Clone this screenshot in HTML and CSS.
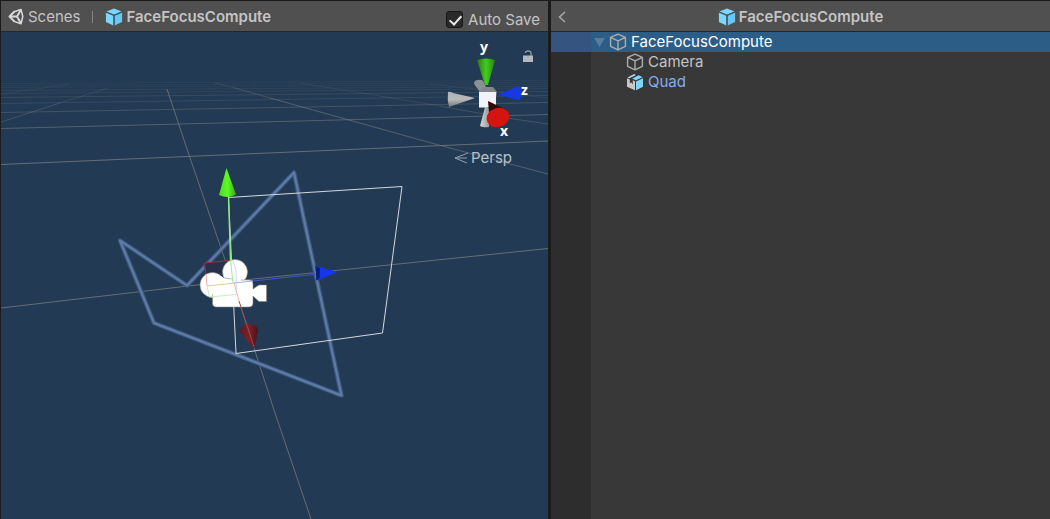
FILE: index.html
```html
<!DOCTYPE html>
<html lang="en">
<head>
<meta charset="utf-8">
<meta name="viewport" content="width=device-width, initial-scale=1">
<title>FaceFocusCompute</title>
<link rel="stylesheet" href="styles.css">
</head>
<body>
<svg class="defs" width="0" height="0" aria-hidden="true">
  <symbol id="prefab" viewBox="0 0 18 18">
    <path d="M9 .6 16.6 3.6 9 6.8 1.4 3.6Z" fill="#7fd6fd"/>
    <path d="M.9 4.4 8.4 7.6V17.4L.9 14Z" fill="#7fd6fd"/>
    <path d="M17.1 4.4 9.6 7.6V17.4L17.1 14Z" fill="#6ac6f2"/>
    <path d="M1 4 9 7.3 17 4M9 7.3V17" fill="none" stroke="#31566a" stroke-width="1.1"/>
  </symbol>
  <symbol id="cube" viewBox="0 0 18 18">
    <path d="M9 1.2 16.4 4.4V13.4L9 16.8 1.6 13.4V4.4ZM1.6 4.4 9 7.9 16.4 4.4M9 7.9V16.8" fill="none" stroke="currentColor" stroke-width="1.4" stroke-linejoin="round"/>
  </symbol>
  <symbol id="variant" viewBox="0 0 18 18">
    <path d="M1.4 4.4 8.2 1.1 10 1.9 3.4 5.3Z" fill="#a9dcf2"/>
    <path d="M6.2 5.5 12.8 2.3 16.6 4.2 9.8 7.2Z" fill="#7fd6fd"/>
    <path d="M1 5.3 3.8 6.6V10.6L5.3 9.2 6.8 11.6V7.2L9 8.2V17.2L1 13.8Z" fill="#c8c8c8"/>
    <path d="M10 8.4 17 5.2V13.8L10 17.2Z" fill="#7fd6fd"/>
  </symbol>
</svg>
<div class="editor">
  <main class="pane scene-pane">
    <header class="bar">
      <nav class="crumbs" aria-label="Breadcrumb">
        <a class="crumb" href="#scenes">
          <svg class="icon" viewBox="0 0 18 18" aria-hidden="true"><path d="M7 3.800 14 1.500 15.800 8.500 14 15.800 7 13.400" fill="none" stroke="#d8d8d8" stroke-width="1.500" stroke-linejoin="round"/><path d="M7.500 3.500 2.500 8.500 7.500 13.600M2.500 8.500H10M10 8.500 13.800 2M10 8.500 13.800 15.200" fill="none" stroke="#d8d8d8" stroke-width="2" stroke-linejoin="round"/></svg>
          <span>Scenes</span>
        </a>
        <span class="rule"></span>
        <a class="crumb current" href="#prefab-root"><svg class="icon" aria-hidden="true"><use href="#prefab"/></svg><span>FaceFocusCompute</span></a>
      </nav>
      <label class="autosave"><input class="tick" type="checkbox" checked><span>Auto Save</span></label>
    </header>
    <div class="view">
      <svg class="world" viewBox="1 32 547 487" preserveAspectRatio="xMinYMin slice" role="img" aria-label="Scene view with camera and quad">
        <defs>
          <linearGradient id="greenCone"><stop offset="0" stop-color="#4bdc19"/><stop offset=".5" stop-color="#5cfb24"/><stop offset="1" stop-color="#39ad12"/></linearGradient>
          <linearGradient id="redCone"><stop offset="0" stop-color="#5c1c24"/><stop offset=".5" stop-color="#7c2027"/><stop offset="1" stop-color="#48141b"/></linearGradient>
        </defs>
        <g fill="none" stroke="#777b7d" stroke-width="1">
          <path d="M1 308 188 286 234 281 548 248.500M167 89 188 152 234 286 274 410 311 519" opacity=".8"/>
          <path d="M1 164.500 280 152.500 548 141" opacity=".8"/>
          <path d="M1 128.500 280 121.500 548 114.500M270 98 435 144 548 174" opacity=".6"/>
          <path d="M1 112.500 280 107.500 548 102.500M1 122 60 103M235 88 270 98M440 106 500 117 548 124" opacity=".4"/>
          <path d="M60 103 108 88M215 83 235 88M380 96 440 106M1 103.500 280 99.500 548 95.500M1 97.500 280 94.500 548 91.500" opacity=".25"/>
          <path d="M1 93.500 548 88.500M1 90.500 548 86.500M1 94 70 84M300 83 380 96M430 84 548 98" opacity=".16"/>
          <path d="M1 87.500 548 84.500M1 85.500 548 82.500M1 83.500 548 80.500" opacity=".1"/>
        </g>
        <path d="M120 240.500 187 285.500 294 172.500 341.500 395.500 154 323Z" fill="none" stroke="#3f5b83" stroke-width="4.500" stroke-linejoin="round"/>
        <path d="M120 240.500 187 285.500 294 172.500 341.500 395.500 154 323Z" fill="none" stroke="#607ba6" stroke-width="2" stroke-linejoin="round"/>
        <path d="M228.500 197.500 402 186.500 382.500 333 236 353.500Z" fill="none" stroke="#d3d9de"/>
        <path d="M204 263 232 260 234 283 207 286Z" fill="#28304a"/>
        <g fill="#fff" stroke="#8d8a85" stroke-width=".6">
          <circle cx="212.500" cy="285" r="12.500"/>
          <circle cx="235" cy="272" r="12.500"/>
          <path d="M224 278 240 280H249Q253 280 253 284V289L259 285H266.500V301.500H259L253 296V303Q253 307 249 307H216Q212.500 307 212.500 303V289Z"/>
        </g>
        <path d="M208 281 221 276 228 281 240 276 242 289 222 295 208 294Z" fill="#fff"/>
        <path d="M206 274 204.500 263 229 260.500" fill="none" stroke="#9c3342"/>
        <path d="M206 274 207 286" fill="none" stroke="#f0b0b0"/>
        <path d="M207 286 235 283" fill="none" stroke="#d9cf96"/>
        <path d="M207 286 209.500 297 236 294.500" fill="none" stroke="#c9f0b8"/>
        <path d="M233 261 236 270 236.500 294" fill="none" stroke="#d5d9f4"/>
        <path d="M234 283 253 281" stroke="#a5b6fa"/>
        <path d="M253 281 318 274" stroke="#3b57cf"/>
        <path d="M315.500 266 338 272 316.500 280.500Z" fill="#1536ed"/>
        <path d="M315.500 266 320 268.500 319.500 278 316.500 280.500Z" fill="#0a1a86"/>
        <path d="M228.500 196 230.500 260" fill="none" stroke="#8eea78" stroke-width="1.400"/>
        <path d="M230.500 260 233 283" fill="none" stroke="#a6e894"/>
        <path d="M226.500 168 236 194.500Q228 199 219 195Z" fill="url(#greenCone)"/>
        <path d="M240 332Q241 324 249 324 257 324 258 331L254 349Z" fill="url(#redCone)"/>
        <path d="M234 283 239 301" stroke="#efb9af"/>
        <path d="M239 301 254 347" stroke="#965048"/>
      </svg>
      <div class="gizmo">
        <svg class="axes" viewBox="440 36 102 108" role="img" aria-label="Orientation gizmo">
          <defs>
            <linearGradient id="yAxis"><stop offset="0" stop-color="#277811"/><stop offset=".5" stop-color="#43cd20"/><stop offset="1" stop-color="#26830f"/></linearGradient>
            <linearGradient id="grayAxis" x2="0" y2="1"><stop offset="0" stop-color="#aeb0b2"/><stop offset=".5" stop-color="#b9babc"/><stop offset="1" stop-color="#737679"/></linearGradient>
            <linearGradient id="downAxis"><stop offset="0" stop-color="#d6d6d6"/><stop offset="1" stop-color="#8b8d90"/></linearGradient>
          </defs>
          <path d="M474 84Q474 80 478 80 483 79 484 83L488 91 480 92Z" fill="#8b9196"/>
          <path d="M448 92Q450 91 453 93L475 98 449 107Q447 100 448 92Z" fill="url(#grayAxis)"/>
          <path d="M480 126 485 107 491 109 489 127Q483 128 480 126Z" fill="url(#downAxis)"/>
          <path d="M479 91 483 87H493L497 92 495 104 479 93Z" fill="#83868a"/>
          <path d="M479 92H496V107.500H479Z" fill="#f2f3f6"/>
          <path d="M477 60Q486 57 495 60L488 85H485Z" fill="url(#yAxis)"/>
          <path d="M497 95 519 86Q523 91 520 100Z" fill="#1638e6"/>
          <path d="M488 101 507 110 490 124Z" fill="#300b0b"/>
          <ellipse cx="498" cy="117.500" rx="11.500" ry="9.500" transform="rotate(-18 498 117.500)" fill="#d5130f"/>
          <g class="axis-label"><text x="480" y="52">y</text><text x="521" y="95">z</text><text x="500" y="136">x</text></g>
        </svg>
        <button class="lock" type="button" aria-label="Lock rotation"><svg class="lock-icon" viewBox="0 0 10 12" aria-hidden="true"><path d="M2.500 3Q2.500 1 5 1 8 1 8 3V6" fill="none" stroke="#8f9aa4" stroke-width="1.300"/><rect y="5.500" width="10" height="6.500" fill="#b2b8bd"/></svg></button>
        <button class="persp" type="button"><svg class="persp-icon" viewBox="0 0 14 12" aria-hidden="true"><path d="M14 1 1 6 13 11M1 6H13" fill="none" stroke="currentColor"/></svg><span>Persp</span></button>
      </div>
    </div>
  </main>
  <aside class="pane tree-pane">
    <header class="bar tree-bar">
      <button class="back" type="button" aria-label="Back"><svg class="back-icon" viewBox="0 0 8 12" aria-hidden="true"><path d="M7 1 1.500 6 7 11" fill="none" stroke="#aaa" stroke-width="1.500"/></svg></button>
      <h1 class="title"><svg class="icon" aria-hidden="true"><use href="#prefab"/></svg><span>FaceFocusCompute</span></h1>
    </header>
    <ul class="tree">
      <li class="row selected" id="prefab-root"><button class="fold" type="button" aria-label="Collapse"><svg class="fold-icon" viewBox="0 0 12 10" aria-hidden="true"><path d="M0 0H12L6 10Z" fill="#587c9d"/></svg></button><svg class="icon cube" aria-hidden="true"><use href="#cube"/></svg><span>FaceFocusCompute</span></li>
      <li class="row child"><svg class="icon cube" aria-hidden="true"><use href="#cube"/></svg><span>Camera</span></li>
      <li class="row child linked"><svg class="icon" aria-hidden="true"><use href="#variant"/></svg><span>Quad</span></li>
    </ul>
  </aside>
</div>
</body>
</html>
```

FILE: styles.css
```css
* { box-sizing: border-box; }
body {
  margin: 0;
  background: #1b1b1c;
  color: #c4c4c4;
  font: 15px/20px Inter, "Liberation Sans", sans-serif;
}
button { margin: 0; padding: 0; border: 0; background: none; color: inherit; font: inherit; }
a { color: inherit; text-decoration: none; }
svg { display: block; flex: none; }
.defs { position: absolute; }
.editor {
  display: grid;
  grid-template-columns: 547fr 499fr;
  gap: 3px;
  min-height: 100vh;
  padding: 1px 0 0 1px;
}
.pane { display: flex; flex-direction: column; min-width: 0; }
.bar {
  display: flex;
  justify-content: space-between;
  height: 31px;
  padding-top: 1px;
  background: #505050;
  border-bottom: 1px solid #262626;
}
.icon { width: 18px; height: 18px; }
.crumbs { display: flex; align-items: center; padding-left: 6px; }
.crumb { display: flex; align-items: center; gap: 3px; }
.current, .title { font-weight: 600; }
.rule { width: 1px; height: 12px; margin: 0 12px; background: #858585; }
.autosave { display: flex; align-items: center; gap: 5px; padding: 7px 8px 0 0; }
.tick {
  appearance: none;
  width: 17px;
  height: 17px;
  margin: 0 0 2px;
  border: 1px solid #181818;
  border-radius: 3px;
  background: #2a2a2a;
}
.tick:checked::before {
  content: "";
  display: block;
  width: 5px;
  height: 10px;
  margin: 1px 0 0 5px;
  border: solid #ececec;
  border-width: 0 2px 2px 0;
  transform: rotate(42deg);
}
.view { position: relative; flex: 1; overflow: hidden; background: #223a53; }
.world { position: absolute; inset: 0; width: 100%; height: 100%; }
.gizmo { position: absolute; top: 4px; right: 6px; width: 102px; }
.axes { width: 102px; height: 108px; }
.axis-label { fill: #fff; font: 700 14px "Open Sans", sans-serif; }
.lock { position: absolute; top: 14px; right: 9px; }
.lock-icon { width: 10px; height: 12px; }
.persp { display: flex; align-items: center; gap: 3px; margin: 4px 0 0 14px; color: #b8c2ca; }
.persp-icon { width: 14px; height: 12px; color: #8ea0ae; }
.tree-pane { background: linear-gradient(90deg, #2d2d2d 40px, #383838 40px); }
.tree-bar { position: relative; justify-content: center; align-items: center; }
.back { position: absolute; left: 7px; }
.back-icon { width: 8px; height: 12px; }
.title { display: flex; align-items: center; gap: 3px; margin: 0; font-size: 15px; }
.tree { margin: 0; padding: 0; list-style: none; }
.row { display: flex; align-items: center; gap: 4px; height: 20px; padding-left: 43px; }
.selected { background: linear-gradient(90deg, #35547f 40px, #2c5d87 40px); color: #fff; }
.fold { width: 11px; }
.fold-icon { width: 11px; height: 9px; }
.cube { color: #acacac; }
.child { padding-left: 75px; }
.linked { color: #84aef0; }
```
